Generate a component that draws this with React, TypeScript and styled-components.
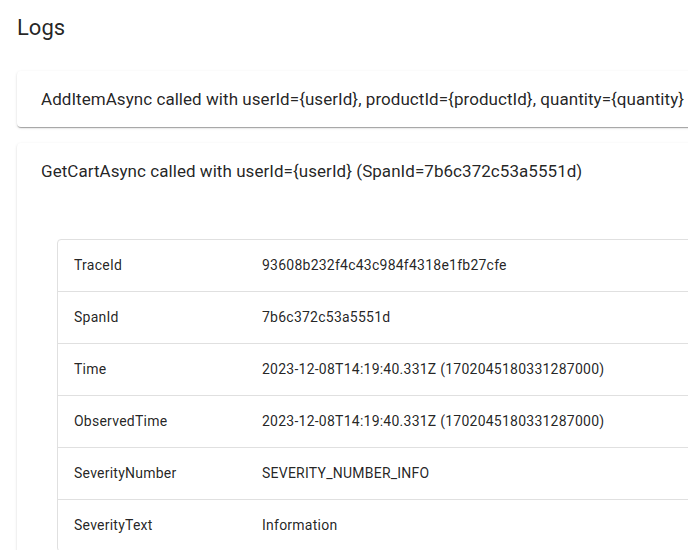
import React, { useState } from "react";
import styled, { createGlobalStyle } from "styled-components";

const GlobalStyle = createGlobalStyle`
  html, body {
    margin: 0;
    padding: 0;
    overflow: hidden;
    background: #fff;
    font-family: Roboto, "Liberation Sans", sans-serif;
    color: rgba(0, 0, 0, 0.87);
  }
`;

const Page = styled.div`
  padding: 13px 0 0 17px;
  width: 980px;
`;

const Title = styled.h1`
  margin: 0 0 29px;
  font-size: 22px;
  line-height: 29px;
  font-weight: 400;
`;

const AccordionList = styled.div`
  display: flex;
  flex-direction: column;
  gap: 16px;
`;

const Accordion = styled.div`
  background: #fff;
  border-radius: 4px;
  box-shadow: 0px 2px 1px -1px rgba(0, 0, 0, 0.2),
    0px 1px 1px 0px rgba(0, 0, 0, 0.14), 0px 1px 3px 0px rgba(0, 0, 0, 0.12);
`;

const Summary = styled.button`
  display: block;
  width: 100%;
  border: none;
  background: none;
  text-align: left;
  padding: 16px 24px;
  font: inherit;
  font-size: 17px;
  line-height: 24px;
  letter-spacing: 0.05px;
  color: inherit;
  white-space: nowrap;
  cursor: pointer;
`;

const Details = styled.div`
  padding: 40px;
`;

const Table = styled.div`
  border: 1px solid #e0e0e0;
  border-radius: 4px;
  overflow: hidden;
`;

const Row = styled.div`
  display: grid;
  grid-template-columns: 188px 1fr;
  border-bottom: 1px solid #e0e0e0;
  &:last-child {
    border-bottom: none;
  }
`;

const Cell = styled.div`
  padding: 16px;
  font-size: 14px;
  line-height: 19px;
  letter-spacing: 0.24px;
  white-space: nowrap;
`;

type Attr = { key: string; value: string };

const attributes: Attr[] = [
  { key: "TraceId", value: "93608b232f4c43c984f4318e1fb27cfe" },
  { key: "SpanId", value: "7b6c372c53a5551d" },
  { key: "Time", value: "2023-12-08T14:19:40.331Z (1702045180331287000)" },
  { key: "ObservedTime", value: "2023-12-08T14:19:40.331Z (1702045180331287000)" },
  { key: "SeverityNumber", value: "SEVERITY_NUMBER_INFO" },
  { key: "SeverityText", value: "Information" },
];

const logs = [
  {
    title:
      "AddItemAsync called with userId={userId}, productId={productId}, quantity={quantity}",
  },
  {
    title: "GetCartAsync called with userId={userId} (SpanId=7b6c372c53a5551d)",
  },
];

const App: React.FC = () => {
  const [open, setOpen] = useState<number | null>(1);

  return (
    <>
      <GlobalStyle />
      <Page>
        <Title>Logs</Title>
        <AccordionList>
          {logs.map((log, i) => (
            <Accordion key={i}>
              <Summary onClick={() => setOpen(open === i ? null : i)}>
                {log.title}
              </Summary>
              {open === i && (
                <Details>
                  <Table>
                    {attributes.map((a) => (
                      <Row key={a.key}>
                        <Cell>{a.key}</Cell>
                        <Cell>{a.value}</Cell>
                      </Row>
                    ))}
                  </Table>
                </Details>
              )}
            </Accordion>
          ))}
        </AccordionList>
      </Page>
    </>
  );
};

export default App;
